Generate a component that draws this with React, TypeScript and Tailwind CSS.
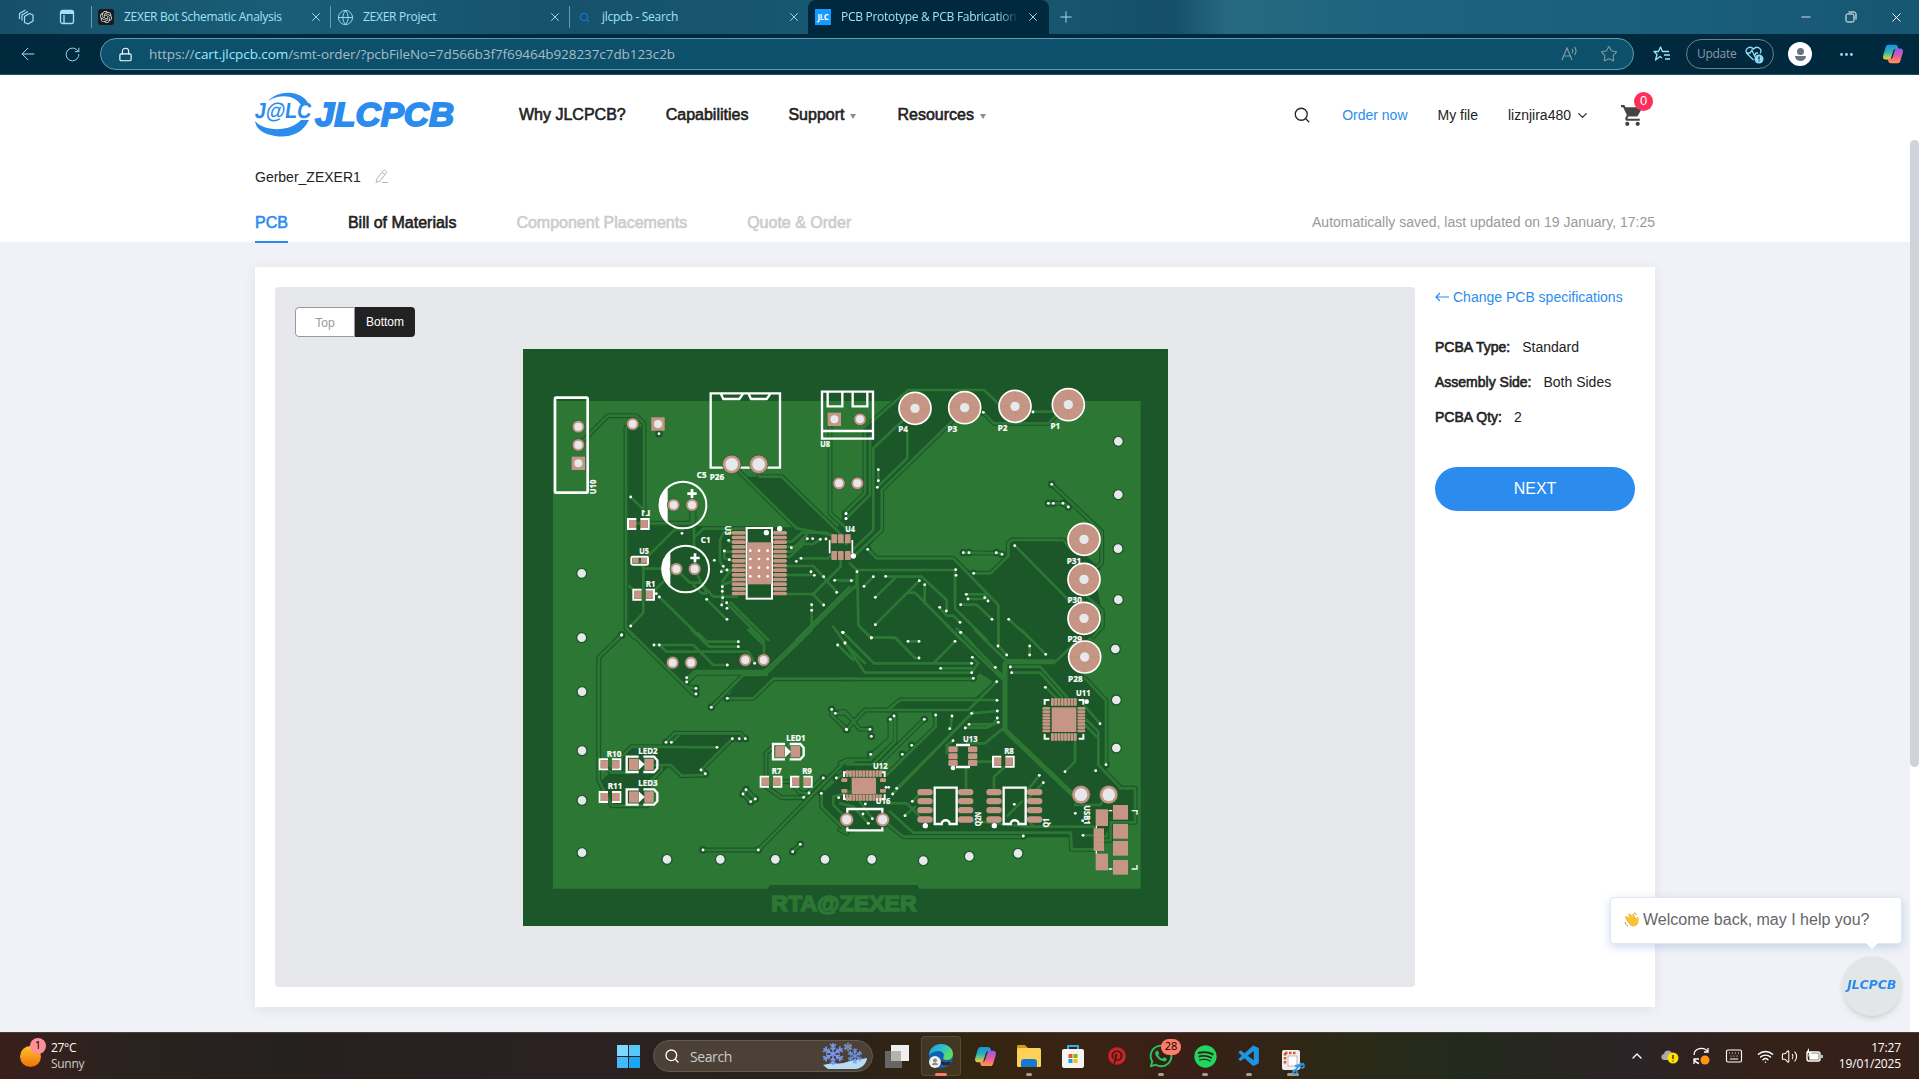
import React from "react";
import { FaWhatsapp, FaSpotify, FaPinterest } from "react-icons/fa";
import { VscVscode } from "react-icons/vsc";
import { SiOpenai } from "react-icons/si";
import { MdShoppingCart } from "react-icons/md";
import { ArrowLeft, ChevronDown, ChevronUp, Globe, Keyboard, Lock, Minus, MoreHorizontal, Plus, RotateCw, Search, Star, Volume2, Wifi, X } from "lucide-react";

/* ---------- Board drawing (units are thirds of a pixel) ---------- */

type Quad = { dx: number; dy: number; traces: string[]; vias: number[][] };

const DARK = "#1b5729";
const LIGHT = "#2d7735";
const COPPER = "#c69585";
const HOLE = "#e7e8ec";

const quads: Quad[] = [
  {
    dx: 0,
    dy: 0,
    traces: [
      "176,315 264,227 348,227 372,250 372,540",
      "318,262 318,865 340,890",
      "332,471 370,508",
      "338,550 515,550 515,500",
      "522,500 522,620",
      "486,568 465,568 380,652",
      "524,590 550,566 740,566",
      "360,662 370,686 465,686",
      "328,738 350,762",
      "370,680 370,818 332,858",
      "400,755 465,690",
      "418,771 550,900",
      "470,690 510,728 540,728 580,770 650,770",
      "525,690 560,760 545,760 520,735",
      "560,778 620,838",
      "655,578 610,578 600,600 600,665 608,678",
      "655,605 626,605",
      "655,635 613,635 613,655 640,662",
      "655,690 605,690",
      "655,718 607,735 607,770 607,790",
      "655,675 625,700 607,725",
      "620,790 730,900",
      "632,788 745,900",
      "635,372 830,565 960,590",
      "716,372 718,410 785,410 960,580",
      "930,262 930,520 985,570",
      "780,605 815,605 845,578 920,578 980,612",
      "780,620 825,620 860,585",
      "780,635 812,635 862,596",
      "780,650 810,650 850,612 880,612 902,598",
      "840,655 925,655 950,635",
      "780,678 880,678 950,755",
      "780,705 873,705 873,695",
      "780,762 880,762 962,680 962,650",
      "830,900 990,740",
      "840,900 990,752",
      "875,795 875,855 830,900",
      "910,795 878,762",
      "945,720 1000,720",
      "305,885 290,900",
    ],
    vias: [
      [417, 281], [332, 471], [486, 580], [626, 601], [613, 633], [583, 661], [628, 659], [610, 679], [604, 695], [621, 690],
      [607, 740], [607, 754], [608, 773], [605, 795], [620, 788], [621, 805], [621, 838], [560, 778], [409, 761], [418, 771],
      [332, 858], [305, 885], [862, 596], [878, 596], [901, 598], [918, 597], [814, 623], [829, 664], [843, 655], [873, 695],
      [883, 706], [911, 710], [944, 721], [950, 757], [911, 795], [875, 794], [875, 811], [968, 877], [978, 521], [978, 536], [440, 712],
    ],
  },
  {
    dx: 960,
    dy: 0,
    traces: [
      "75,275 75,460 18,515",
      "90,290 90,465 18,536",
      "95,245 205,150 432,150 490,205",
      "190,240 100,325 100,570 40,628",
      "202,275 202,355 112,442",
      "335,245 125,450 125,570 40,650",
      "430,217 462,250 625,250 660,215",
      "580,215 640,215",
      "115,389 115,425",
      "635,433 785,575 785,670 760,690",
      "625,490 670,490 685,500",
      "83,628 110,655 340,655 475,795 475,920",
      "370,638 485,640",
      "400,700 452,700 505,648 505,610 515,600 670,600 690,625",
      "30,670 50,690 345,690 345,805 440,900",
      "52,690 55,855 90,892 165,892 180,905",
      "525,617 690,785",
      "0,722 34,722",
      "50,690 50,735 0,782",
      "72,738 100,710",
      "137,710 245,710 320,780 320,812",
      "106,772 165,715",
      "106,854 238,722",
      "205,758 225,758 365,900",
      "254,735 254,790",
      "299,803 320,827 340,827 361,848",
      "379,763 434,763 444,782",
      "384,777 434,777",
      "362,794 410,794 456,838",
      "506,838 575,900",
      "362,877 400,915",
      "740,768 787,812 787,860 760,890",
    ],
    vias: [
      [430, 217], [579, 216], [115, 389], [115, 422], [112, 442], [18, 521], [18, 536], [83, 628], [635, 433], [625, 490],
      [640, 490], [669, 490], [685, 501], [370, 638], [387, 638], [469, 638], [486, 643], [401, 700], [347, 689], [348, 706],
      [524, 617], [51, 695], [34, 722], [72, 739], [100, 710], [137, 709], [106, 772], [106, 854], [238, 722], [254, 734],
      [299, 802], [319, 813], [360, 847], [379, 763], [384, 777], [434, 773], [444, 783], [362, 794], [456, 838], [506, 838],
      [362, 877], [94, 893], [9, 877],
    ],
  },
  {
    dx: 0,
    dy: 870,
    traces: [
      "305,15 236,83 236,450 275,527 380,527",
      "320,-5 520,192 528,192",
      "500,170 527,176",
      "402,45 520,45 580,105 622,105",
      "418,45 440,65 685,65 704,100",
      "515,0 568,50 655,50",
      "535,10 560,35 655,35",
      "685,0 732,45 732,90",
      "690,-5 732,35",
      "500,145 525,123 735,123 865,0",
      "500,156 530,130 740,130 875,0",
      "574,232 670,135 740,135",
      "622,205 700,205 760,146 1000,146",
      "438,337 463,310 662,310 676,326",
      "455,337 475,318",
      "300,385 335,350 591,352",
      "637,326 545,418 556,431",
      "405,405 452,405 485,437 556,435",
      "425,405 425,420 390,455",
      "255,410 275,428 330,428",
      "760,350 738,370 738,470 785,503 850,503",
      "770,455 820,455",
      "820,465 840,488 866,490",
      "549,660 715,660 975,395 1000,395",
      "818,665 841,643",
      "905,490 905,530 975,600 1000,600",
      "950,445 975,430",
      "990,485 940,500 940,525 975,560",
      "680,478 669,492 692,515 706,507 680,478",
      "935,238 935,255 980,298",
      "945,250 975,250 1000,272",
      "953,45 1000,90",
      "970,8 990,26",
      "850,503 910,443",
    ],
    vias: [
      [305, 15], [402, 45], [418, 45], [655, 35], [655, 50], [622, 105], [704, 100], [500, 143], [500, 156], [528, 175],
      [528, 192], [574, 232], [622, 205], [438, 337], [454, 337], [637, 326], [658, 326], [676, 326], [591, 352], [543, 420],
      [556, 431], [678, 479], [669, 492], [706, 507], [692, 515], [549, 660], [715, 660], [818, 665], [841, 643], [851, 502],
      [867, 489], [904, 490], [910, 444], [949, 444], [956, 503], [935, 238], [946, 250], [979, 298], [953, 45], [975, 39], [968, 7],
    ],
  },
  {
    dx: 960,
    dy: 870,
    traces: [
      "9,7 102,100 395,100",
      "15,39 75,128 395,128",
      "-20,-10 15,40 75,100",
      "70,0 95,23 165,23 225,84 237,84",
      "204,34 237,34",
      "345,34 280,100",
      "302,115 395,115",
      "397,82 415,100 395,128",
      "0,146 400,146",
      "335,0 490,150",
      "350,-5 490,140",
      "405,0 497,90 645,96 705,40",
      "475,-20 475,48 500,75",
      "545,0 617,73",
      "569,48 569,75",
      "470,155 385,240 75,240 20,298",
      "0,245 15,245 60,298 90,298",
      "145,240 180,210 470,210",
      "0,400 20,390 90,390 155,330 155,270",
      "20,403 98,403 165,335 165,258",
      "150,270 150,325 90,380",
      "253,268 110,410",
      "287,255 287,290 140,435",
      "395,250 158,492",
      "170,475 400,245",
      "336,258 332,295",
      "376,293 440,293 475,277",
      "387,283 460,283 472,265",
      "472,243 395,250",
      "490,295 435,340 380,340",
      "340,332 320,345 320,370",
      "512,110 600,110 680,200",
      "515,128 600,128 665,200",
      "617,172 650,205",
      "735,230 780,280",
      "740,270 775,305 775,405 840,472",
      "735,285 770,320",
      "735,145 798,212 798,403",
      "705,330 705,395 675,425",
      "840,475 885,475 885,577 812,577 812,630 790,632",
      "800,630 812,630",
      "378,415 378,480",
      "410,395 460,395",
      "495,410 462,440 462,480",
      "598,436 500,560",
      "610,458 560,510",
      "523,523 523,560",
      "560,510 495,570",
      "375,570 560,590 760,590 780,610",
      "530,530 560,560 580,590",
      "725,495 705,525 780,525 800,500",
      "217,514 240,490",
      "195,557 225,530",
      "140,520 200,520 250,570",
      "130,570 190,620 550,620",
      "150,545 220,608 692,608 695,658 770,658",
      "729,616 775,616",
      "0,520 40,530 85,580",
      "60,515 97,566",
      "0,600 20,610",
    ],
    vias: [
      [9, 7], [15, 39], [94, 24], [204, 34], [237, 34], [345, 34], [237, 84], [362, 7], [397, 82], [395, 100],
      [302, 115], [395, 128], [400, 145], [466, 112], [474, 48], [500, 75], [511, 111], [515, 128], [569, 48], [569, 75],
      [617, 73], [470, 155], [471, 211], [472, 243], [472, 264], [475, 277], [395, 250], [387, 283], [376, 294], [336, 258],
      [329, 296], [339, 332], [287, 255], [253, 268], [162, 258], [151, 268], [20, 299], [90, 298], [94, 319], [92, 373],
      [187, 373], [215, 346], [616, 172], [780, 281], [798, 404], [767, 422], [675, 425], [598, 436], [610, 458], [170, 475],
      [158, 492], [138, 472], [146, 472], [217, 514], [195, 557], [523, 523], [550, 618], [706, 550], [729, 616], [76, 522], [69, 552],
      [97, 566], [85, 580], [728, 572],
    ],
  },
];

const mountHoles = [
  [185, 700], [185, 893], [186, 1055], [186, 1232], [186, 1381], [186, 1538], [441, 1558], [601, 1558], [766, 1558], [915, 1558],
  [1055, 1558], [1210, 1562], [1348, 1549], [1494, 1540], [1795, 304], [1795, 464], [1794, 626], [1795, 779], [1786, 927], [1789, 1080], [1789, 1224],
];

const bigPads = [
  [1185, 205, 50], [1334, 203, 50], [1485, 199, 50], [1645, 194, 50], [1692, 598, 50], [1692, 718, 50], [1692, 835, 50], [1694, 951, 50],
];

const ringPads = [
  [175, 260, 19, 12], [175, 315, 19, 12], [338, 252, 19, 12], [635, 373, 28, 19], [716, 373, 28, 19], [461, 495, 19, 12], [516, 495, 19, 12],
  [469, 687, 19, 12], [524, 687, 19, 12], [957, 430, 19, 12], [1012, 430, 19, 12], [1020, 238, 19, 12], [458, 968, 19, 12], [513, 968, 19, 12],
  [676, 960, 19, 12], [731, 960, 19, 12], [980, 1439, 21, 14], [1088, 1439, 21, 14], [1683, 1364, 28, 19], [1766, 1364, 28, 19],
];

const squarePads = [[175, 370], [414, 252], [943, 238]];

const labels: [number, number, string, number?, boolean?][] = [
  [228, 441, "U10", -90], [376, 528, "L1", 0, true], [372, 642, "U5"], [392, 740, "R1"], [545, 415, "C5"], [591, 421, "P26"],
  [557, 609, "C1"], [615, 571, "U3", 90], [915, 322, "U8"], [990, 577, "U4"], [1149, 277, "P4"], [1297, 275, "P3"], [1448, 272, "P2"],
  [1606, 267, "P1"], [1662, 671, "P31"], [1664, 790, "P30"], [1664, 907, "P29"], [1666, 1025, "P28"], [1690, 1068, "U11"], [828, 1202, "LED1"],
  [384, 1241, "LED2"], [384, 1339, "LED3"], [282, 1251, "R10"], [285, 1348, "R11"], [770, 1302, "R7"], [861, 1302, "R9"], [1351, 1205, "U13"],
  [1467, 1242, "R8"], [1081, 1286, "U12"], [1089, 1393, "U16"], [1382, 1437, "Q2N", -90], [1588, 1448, "Q1", -90], [1693, 1425, "USB1", 90],
];

function Bracket({ x, y, w, h }: { x: number; y: number; w: number; h: number }) {
  const c = 14;
  return (
    <path
      d={`M${x},${y + c}V${y}H${x + c} M${x + w - c},${y}H${x + w}V${y + c} M${x + w},${y + h - c}V${y + h}H${x + w - c} M${x + c},${y + h}H${x}V${y + h - c}`}
      fill="none"
      stroke="#fff"
      strokeWidth="6"
    />
  );
}

function TwoPad({ x, y, gap = 36 }: { x: number; y: number; gap?: number }) {
  return (
    <g>
      <g fill="none" stroke="#fff" strokeWidth="6">
        <path d={`M${x + 12},${y - 15}H${x - 13}V${y + 15}H${x + 12}`} />
        <path d={`M${x + gap - 12},${y - 15}H${x + gap + 13}V${y + 15}H${x + gap - 12}`} />
      </g>
      <rect x={x - 10} y={y - 12} width="22" height="24" fill={COPPER} />
      <rect x={x + gap - 12} y={y - 12} width="22" height="24" fill={COPPER} />
    </g>
  );
}

function Led({ x, y }: { x: number; y: number }) {
  return (
    <g>
      <path d={`M${x + 36},${y - 23}H${x}V${y + 23}H${x + 36}`} fill="none" stroke="#fff" strokeWidth="7" />
      <path d={`M${x + 50},${y - 23}H${x + 82}L${x + 92},${y - 12}V${y + 12}L${x + 82},${y + 23}H${x + 50}`} fill="none" stroke="#fff" strokeWidth="7" />
      <rect x={x + 7} y={y - 17} width="28" height="34" fill={COPPER} />
      <rect x={x + 53} y={y - 17} width="28" height="34" fill={COPPER} />
      <path d={`M${x + 36},${y - 17}L${x + 54},${y}L${x + 36},${y + 17}Z`} fill="#fff" />
    </g>
  );
}

function Soic({ x, y }: { x: number; y: number }) {
  return (
    <g>
      {[0, 27, 54, 82].map((o) => (
        <g key={o} fill={COPPER}>
          <rect x={x - 48} y={y + 4 + o} width="46" height="19" rx="9" />
          <rect x={x + 74} y={y + 4 + o} width="46" height="19" rx="9" />
        </g>
      ))}
      <path
        d={`M${x + 4},${y}H${x + 70}V${y + 109}H${x + 49}C${x + 49},${y + 94} ${x + 25},${y + 94} ${x + 25},${y + 109}H${x + 4}Z`}
        fill={DARK}
        stroke="#fff"
        strokeWidth="7"
      />
      <circle cx={x - 24} cy={y + 114} r="8" fill="#fff" />
    </g>
  );
}

function Board() {
  return (
    <svg width="645" height="577" viewBox="9 27 1935 1731" preserveAspectRatio="none" className="block">
      <rect x="9" y="27" width="1935" height="1731" fill={DARK} />
      <path d="M99,183H1862V1646H1197L1193,1635H750L743,1646H99Z" fill={LIGHT} />
      <polygon
        fill={DARK}
        points="325,262 368,262 368,556 830,562 675,410 785,410 950,570 975,515 1030,460 1030,270 1120,182 1680,182 1620,215 1585,255 1420,255 1385,215 1295,240 1090,450 1090,570 1040,628 1070,655 1300,655 1360,700 1415,700 1465,650 1465,610 1475,600 1630,600 1690,640 1745,690 1720,690 1745,810 1745,860 1700,900 1690,1015 1760,1080 1760,1290 1800,1342 1845,1342 1845,1445 1780,1450 1720,1530 1655,1530 1650,1492 1147,1492 1110,1445 1090,1472 970,1472 900,1400 905,1360 965,1310 965,1264 1050,1264 1100,1305 1245,1160 1245,1112 1110,1110 1140,1080 1365,1075 1420,1025 1380,1000 1360,1016 760,1016 700,1075 622,1075 665,1005 525,998 490,1035 325,870"
      />
      <polygon
        fill={DARK}
        points="470,1185 655,1185 545,1295 550,1305 485,1307 450,1275 425,1300 400,1325 370,1395 275,1390 240,1325 300,1270 335,1220 440,1215"
      />
      {quads.map((q, i) => (
        <g key={i} transform={`translate(${q.dx} ${q.dy})`} fill="none" stroke={DARK} strokeWidth="15" strokeLinejoin="round" strokeLinecap="round">
          {q.traces.map((p) => (
            <polyline key={p} points={p} />
          ))}
          {q.vias.map(([x, y]) => (
            <circle key={`${x}-${y}`} cx={x} cy={y} r="4" />
          ))}
        </g>
      ))}
      {quads.map((q, i) => (
        <g key={i} transform={`translate(${q.dx} ${q.dy})`} fill="none" stroke={LIGHT} strokeWidth="8" strokeLinejoin="round" strokeLinecap="round">
          {q.traces.map((p) => (
            <polyline key={p} points={p} />
          ))}
        </g>
      ))}
      {/* Wide power rail */}
      <path d="M1455,965V1170L1665,1370 M1455,965H1605" fill="none" stroke={LIGHT} strokeWidth="15" />
      {mountHoles.map(([x, y]) => (
        <circle key={`${x}-${y}`} cx={x} cy={y} r="15" fill={HOLE} stroke={DARK} strokeWidth="4" />
      ))}

      {/* Through-hole parts */}
      <g fill="none" stroke="#fff" strokeWidth="8">
        <rect x="105" y="173" width="98" height="285" rx="3" />
        <path d="M572,160H780V383H572Z M602,160L610,177H658L670,160 M685,160L693,177H740L752,160" strokeWidth="7" />
        <path d="M906,155H1059V296H906Z M906,273H1059 M923,155V199H967V155 M998,155V199H1042V155" strokeWidth="7" />
        <circle cx="489" cy="495" r="70" strokeWidth="6" />
        <circle cx="497" cy="687" r="70" strokeWidth="6" />
        <path d="M502,461H530M516,447V475 M511,654H539M525,640V668" />
      </g>
      <path d="M443,440A70,70 0 0 0 443,550Z M451,632A70,70 0 0 0 451,742Z" fill="#fff" />

      {bigPads.map(([x, y, r]) => (
        <g key={`${x}-${y}`}>
          <circle cx={x} cy={y} r={r - 2} fill={COPPER} stroke="#fff" strokeWidth="5" />
          <path d={`M${x - 45},${y}H${x + 45}M${x},${y - 45}V${y + 45}`} stroke="#b39768" strokeWidth="2" />
          <circle cx={x} cy={y} r="14" fill={HOLE} />
        </g>
      ))}
      {ringPads.map(([x, y, r, h]) => (
        <g key={`${x}-${y}`}>
          <circle cx={x} cy={y} r={r} fill={COPPER} stroke={DARK} strokeWidth="2" />
          <circle cx={x} cy={y} r={h} fill={HOLE} />
        </g>
      ))}
      {squarePads.map(([x, y]) => (
        <g key={`${x}-${y}`}>
          <rect x={x - 20} y={y - 20} width="40" height="40" fill={COPPER} />
          <circle cx={x} cy={y} r="12" fill={HOLE} />
        </g>
      ))}

      {/* Passives */}
      <TwoPad x={337} y={552} />
      <TwoPad x={353} y={764} />
      <TwoPad x={252} y={1273} />
      <TwoPad x={252} y={1371} />
      <TwoPad x={735} y={1325} />
      <TwoPad x={826} y={1325} />
      <TwoPad x={1432} y={1265} />
      <rect x="334" y="650" width="50" height="24" rx="4" fill="none" stroke="#fff" strokeWidth="6" />
      <path d="M338,654H356V670H338Z M363,654H381V670H363Z" fill={COPPER} />
      <Led x={320} y={1273} />
      <Led x={320} y={1371} />
      <Led x={759} y={1235} />

      {/* U3 driver */}
      {Array.from({ length: 14 }, (_, i) => (
        <g key={i} fill={COPPER}>
          <rect x="635" y={573 + i * 14} width="42" height="11" rx="5" />
          <rect x="759" y={573 + i * 14} width="42" height="11" rx="5" />
        </g>
      ))}
      <rect x="680" y="564" width="76" height="212" fill={DARK} stroke="#fff" strokeWidth="6" />
      <rect x="681" y="607" width="74" height="126" fill={COPPER} />
      {[632, 657, 683, 709].map((y) =>
        [691, 717, 743].map((x) => <circle key={`${x}-${y}`} cx={x} cy={y} r="4" fill="#fff" />)
      )}
      <circle cx="739" cy="578" r="8" fill="#fff" />
      <circle cx="779" cy="566" r="8" fill="#fff" />

      {/* U4 */}
      {[934, 954, 975].map((x) => (
        <g key={x} fill={COPPER}>
          <rect x={x} y="583" width="17" height="27" rx="2" />
          <rect x={x} y="633" width="17" height="27" rx="2" />
        </g>
      ))}
      <path d="M929,600V640 M997,600V640" stroke="#fff" strokeWidth="5" />
      <circle cx="1000" cy="648" r="8" fill="#fff" />

      {/* U11 */}
      <Bracket x={1574} y={1080} w={116} h={116} />
      <rect x="1595" y="1102" width="74" height="74" fill={COPPER} />
      {Array.from({ length: 8 }, (_, i) => (
        <g key={i} fill={COPPER}>
          <rect x={1593 + i * 9.8} y="1074" width="8.6" height="24" rx="4" />
          <rect x={1593 + i * 9.8} y="1179" width="8.6" height="24" rx="4" />
          <rect x="1567" y={1101 + i * 9.6} width="24" height="8.6" rx="4" />
          <rect x="1672" y={1101 + i * 9.6} width="24" height="8.6" rx="4" />
        </g>
      ))}
      <circle cx="1700" cy="1085" r="7" fill="#fff" />

      {/* U12 */}
      <Bracket x={972} y={1297} w={122} h={80} />
      <rect x="995" y="1313" width="73" height="49" fill={COPPER} />
      {Array.from({ length: 11 }, (_, i) => (
        <g key={i} fill={COPPER}>
          <rect x={977 + i * 10} y="1291" width="8.8" height="20" rx="3" />
          <rect x={977 + i * 10} y="1363" width="8.8" height="20" rx="3" />
        </g>
      ))}
      <g fill={COPPER}>
        <rect x="964" y="1315" width="18" height="11" rx="3" />
        <rect x="964" y="1347" width="18" height="11" rx="3" />
        <rect x="1080" y="1315" width="18" height="11" rx="3" />
        <rect x="1080" y="1347" width="18" height="11" rx="3" />
      </g>

      {/* U16 */}
      <path d="M982,1418V1407H1087V1418 M982,1462V1471H1087V1462" fill="none" stroke="#fff" strokeWidth="7" />

      {/* U13 */}
      <path d="M1308,1215H1350 M1308,1281H1350" stroke="#fff" strokeWidth="7" />
      {[1219, 1240, 1260].map((y) => (
        <g key={y} fill={COPPER}>
          <rect x="1285" y={y} width="28" height="18" rx="4" />
          <rect x="1344" y={y} width="28" height="18" rx="4" />
        </g>
      ))}
      <circle cx="1299" cy="1284" r="7" fill="#fff" />

      <Soic x={1240} y={1343} />
      <Soic x={1447} y={1343} />
      <path d="M1460,1430L1508,1382" stroke={LIGHT} strokeWidth="8" />

      {/* USB connector */}
      <g fill={COPPER}>
        <rect x="1727" y="1408" width="37" height="50" />
        <rect x="1727" y="1541" width="37" height="50" />
        <rect x="1721" y="1465" width="31" height="68" />
        <rect x="1779" y="1395" width="45" height="44" />
        <rect x="1779" y="1452" width="45" height="44" />
        <rect x="1779" y="1503" width="45" height="44" />
        <rect x="1779" y="1560" width="45" height="44" />
      </g>
      <path d="M1721,1477H1752M1721,1491H1752M1721,1506H1752M1721,1520H1752" stroke="#b39768" strokeWidth="2" />
      <path d="M1766,1412H1777 M1766,1587H1777 M1835,1412H1851V1424 M1835,1587H1851V1575 M1729,1458V1465 M1729,1533V1541" fill="none" stroke="#fff" strokeWidth="4" />

      {quads.map((q, i) => (
        <g key={i} transform={`translate(${q.dx} ${q.dy})`} fill="#fff">
          {q.vias.map(([x, y]) => (
            <circle key={`${x}-${y}`} cx={x} cy={y} r="4.2" />
          ))}
        </g>
      ))}
      <g fill="#fff" stroke="#fff" strokeWidth="0.6" fontSize="24" fontWeight="700" className="font-['Noto_Sans',sans-serif]">
        {labels.map(([x, y, t, r, flip]) => (
          <text
            key={t}
            transform={`translate(${x} ${y}) rotate(${r ?? 0}) scale(${flip ? -1 : 1} 1)`}
            textAnchor="middle"
            textLength={t.length * 14.5}
            lengthAdjust="spacingAndGlyphs"
          >
            {t}
          </text>
        ))}
      </g>
      <text x="972" y="1713" textAnchor="middle" textLength="436" lengthAdjust="spacingAndGlyphs" fontSize="68" fontWeight="900" fill={LIGHT} stroke={LIGHT} strokeWidth="4.500" className="font-['Liberation_Sans',sans-serif]">
        RTA@ZEXER
      </text>
    </svg>
  );
}

/* ---------- Browser chrome ---------- */

function Tab({ icon, title, width }: { icon: React.ReactNode; title: string; width: string }) {
  return (
    <div className={`flex h-[34px] items-center ${width}`}>
      <span className="h-[22px] w-px bg-[#5b9fb5]" />
      <span className="ml-1.5 flex w-4 justify-center">{icon}</span>
      <span className="ml-[10px] flex-1 whitespace-nowrap tracking-[-0.28px]">{title}</span>
      <X size={14} strokeWidth={1.6} className="mr-[7px]" />
    </div>
  );
}

function Copilot({ size }: { size: number }) {
  return (
    <svg width={size} height={size} viewBox="0 0 24 24">
      <defs>
        <linearGradient id="cpa" x1="0" y1="0" x2="0" y2="1">
          <stop offset="0" stopColor="#1a8fe8" />
          <stop offset=".5" stopColor="#2cb5b0" />
          <stop offset="1" stopColor="#f3d02f" />
        </linearGradient>
        <linearGradient id="cpb" x1="0" y1="0" x2="0" y2="1">
          <stop offset="0" stopColor="#8b5cf0" />
          <stop offset=".55" stopColor="#ec5a9c" />
          <stop offset="1" stopColor="#ff9a4a" />
        </linearGradient>
      </defs>
      <path d="M7 2h7.5c1.5 0 2.300.8 2.700 2l.8 2.500h-3c-1.500 0-2.200.7-2.600 2L10 16c-.4 1.300-1 2-2.500 2H4c-2.500 0-3.500-2-2.700-4.500L4 4.500C4.500 3 5.500 2 7 2z" fill="url(#cpa)" />
      <path d="M17 22H9.500c-1.500 0-2.300-.8-2.700-2L6 17.500h3c1.500 0 2.200-.7 2.600-2L14 8c.4-1.300 1-2 2.500-2H20c2.500 0 3.500 2 2.700 4.500L20 19.500c-.5 1.500-1.500 2.500-3 2.500z" fill="url(#cpb)" />
    </svg>
  );
}

function BrowserChrome() {
  return (
    <div className="font-['Open_Sans','Noto_Sans',sans-serif] text-[#9fe3f7]">
      <div className="flex h-[34px] items-center bg-[linear-gradient(90deg,#165068_0%,#1a5d77_15%,#16526c_30%,#195a73_50%,#154f69_61%,#27697f_64%,#1d6480_72%,#19607d_85%,#175673_100%)] text-[12px]">
        <div className="flex w-[91px] items-center gap-6 pl-[17px]">
          <svg width="18" height="18" viewBox="0 0 18 18" fill="none" stroke="currentColor" strokeWidth="1.200" strokeLinejoin="round">
            <path d="M7.500 8.500l5-3 3.500 1.500v6l-5 3-3.500-1.500zM5 12.500V7l6-3.500M2.500 11V5.500L8.500 2" />
          </svg>
          <svg width="16" height="16" viewBox="0 0 16 16" fill="none" stroke="currentColor" strokeWidth="1.300">
            <rect x="1.500" y="1.500" width="13" height="13" rx="2" />
            <path d="M5 6v8" />
            <path d="M2 2h12v3H2z" fill="currentColor" stroke="none" />
          </svg>
        </div>
        <Tab
          width="w-[239px]"
          title="ZEXER Bot Schematic Analysis"
          icon={
            <span className="flex size-4 shrink-0 items-center justify-center rounded-[3px] bg-[#17191c] text-gray-200">
              <SiOpenai size={12} />
            </span>
          }
        />
        <Tab width="w-[239px]" title="ZEXER Project" icon={<Globe size={17} strokeWidth={1.3} className="shrink-0" />} />
        <Tab width="w-[239px]" title="jlcpcb - Search" icon={<Search size={11} strokeWidth={2.5} className="text-[#1479d4]" />} />
        <div className="flex h-[34px] w-[241px] items-center rounded-t-lg bg-[#00293e] pl-[7px]">
          <span className="flex size-4 items-center justify-center bg-[#139bff] text-[8px] font-bold tracking-tighter text-white">JLC</span>
          <span className="ml-[10px] w-[178px] overflow-hidden whitespace-nowrap tracking-[-0.28px] [mask-image:linear-gradient(90deg,#000_88%,transparent)]">
            PCB Prototype &amp; PCB Fabrication
          </span>
          <X size={14} strokeWidth={1.6} className="ml-[7px]" />
        </div>
        <Plus size={18} strokeWidth={1.3} className="ml-[8px]" />
        <div className="ml-auto flex items-center text-white">
          <Minus size={14} strokeWidth={1.4} className="mr-8" />
          <svg width="12" height="12" viewBox="0 0 12 12" fill="none" stroke="currentColor" className="mr-[32px]">
            <rect x="1" y="3" width="8" height="8" rx="1.500" />
            <path d="M3.500 1H9c1.200 0 2 .8 2 2v5.500" />
          </svg>
          <X size={15} strokeWidth={1.5} className="mr-[15px]" />
        </div>
      </div>
      <div className="flex h-[41px] items-center border-b border-[#1b5268] bg-[#00293e]">
        <ArrowLeft size={20} strokeWidth={1.2} className="ml-[18px]" />
        <RotateCw size={17} strokeWidth={1.3} className="ml-[26px]" />
        <div className="ml-[19px] flex h-8 w-[1534px] items-center rounded-full border border-[#5f9cb0] bg-[#0c506c] pr-[15px] text-[13.5px] tracking-[-0.07px] text-[#a9bcc3]">
          <Lock size={15} strokeWidth={1.8} className="mr-4 ml-[17px] text-white" />
          <span>
            https://<span className="text-[#9fe8ff]">cart.jlcpcb.com</span>/smt-order/?pcbFileNo=7d566b3f7f69464b928237c7db123c2b
          </span>
          <svg width="18" height="16" viewBox="0 0 18 16" fill="none" stroke="#8499a1" strokeWidth="1.200" className="ml-auto">
            <path d="M1 14L6 2l5 12M2.700 10h6.600M11 3c1 1 1 3 0 4M13.500 1c2 2 2 6 0 8" />
          </svg>
          <Star size={18} strokeWidth={1.4} className="ml-[21px] text-[#8499a1]" />
        </div>
        <svg width="18" height="17" viewBox="0 0 18 17" fill="none" stroke="currentColor" strokeWidth="1.300" className="ml-[19px]">
          <path d="M9 12l-2-1.500-4.500 3.500 1.500-5.500L1 5.500h4.500L7.500 1l2 4.500H16M11 9h6M12 13h5" strokeLinejoin="round" />
        </svg>
        <div className="ml-[15px] flex h-[30px] w-[88px] items-center justify-between rounded-full border border-[#6f7f88] pr-[9px] pl-2.5 text-[12px] tracking-[-0.3px] text-[#8a9aa1]">
          Update
          <svg width="19" height="19" viewBox="0 0 19 19" fill="none" stroke="#8fdcf5" strokeWidth="1.300">
            <path d="M8.500 15L2 8.500C-1 4 5 0 8.500 4 12 0 18 4 15 8.500M1 8h4l2-3 2.500 6 1.500-3h2" />
            <circle cx="14" cy="14" r="4.500" fill="#8fdcf5" stroke="none" />
            <path d="M14 11.500v3M14 15.500v1" stroke="#00293e" />
          </svg>
        </div>
        <span className="ml-[14px] flex size-6 flex-col items-center justify-center gap-px rounded-full bg-white">
          <span className="size-[7px] rounded-full bg-gray-500" />
          <span className="h-[5px] w-[11px] rounded-b-full bg-gray-500" />
        </span>
        <MoreHorizontal size={17} strokeWidth={2} className="ml-[26px]" />
        <span className="ml-[27px]">
          <Copilot size={22} />
        </span>
      </div>
    </div>
  );
}

/* ---------- Page ---------- */

function Caret() {
  return <span className="mt-0.5 ml-1.5 border-x-[3px] border-t-[5px] border-x-transparent border-t-[#8c8c8c]" />;
}

function Logo() {
  return (
    <svg width="200" height="46" viewBox="0 0 200 46" className="font-['Liberation_Sans',sans-serif]" fill="#2b8cee">
      <path d="M13 9C24-3 48-2 54 13H46C40 4 27 1 13 9z" />
      <path d="M0 29C8 39 34 41 46 28H54C47 43 32 46 20 44 8 42 1 37 0 29z" />
      <text x="0" y="26" fontSize="22" fontWeight="700" textLength="56" lengthAdjust="spacingAndGlyphs" transform="skewX(-8) translate(3 0)">
        J@LC
      </text>
      <text x="60" y="34" fontSize="34" fontWeight="700" fontStyle="italic" stroke="#2b8cee" strokeWidth="1.800" textLength="139" lengthAdjust="spacingAndGlyphs">
        JLCPCB
      </text>
    </svg>
  );
}

function Spec({ label, value }: { label: string; value: string }) {
  return (
    <div className="mb-[15px] flex h-5 items-center gap-3 whitespace-nowrap">
      <span className="[-webkit-text-stroke:0.6px]">{label}</span>
      <span>{value}</span>
    </div>
  );
}

function Page() {
  return (
    <div className="relative flex h-[957px] bg-[#f0f2f7] font-['Liberation_Sans',Arial,sans-serif] text-[14px] text-[#222]">
      <div className="w-[1910px]">
        <div className="h-[167px] bg-white pl-[255px]">
          <div className="flex h-[80px] w-[1400px] items-center text-[16px]">
            <Logo />
            <nav className="ml-[64px] flex items-center [-webkit-text-stroke:0.6px]">
              <span>Why JLCPCB?</span>
              <span className="ml-[40px]">Capabilities</span>
              <span className="ml-[40px]">Support</span>
              <Caret />
              <span className="ml-[41px]">Resources</span>
              <Caret />
            </nav>
            <div className="ml-auto flex items-center text-[14px]">
              <Search size={18} strokeWidth={1.7} />
              <span className="ml-[31px] text-[#2b8cee]">Order now</span>
              <span className="ml-[30px]">My file</span>
              <span className="ml-[30px]">liznjira480</span>
              <ChevronDown size={15} strokeWidth={1.9} className="ml-1" />
              <span className="relative mr-2.5 ml-[30px]">
                <MdShoppingCart size={25} color="#444" />
                <span className="absolute -top-[11px] left-[14px] flex size-[19px] items-center justify-center rounded-full bg-[#ff2e5b] text-[13px] text-white">0</span>
              </span>
            </div>
          </div>
          <div className="flex h-[45px] items-center">
            Gerber_ZEXER1
            <svg width="15" height="15" viewBox="0 0 15 15" fill="none" stroke="#b5b5b5" className="mb-[3px] ml-[13px]">
              <path d="M2 13.500l1-4L9.500 1.500c1-1 3.500.5 3 2L6 12zM8 3.500l3 2M8 13.500h6" />
            </svg>
          </div>
          <div className="flex h-[43px] w-[1400px] gap-[60px] text-[16px]">
            <span className="border-b-2 border-[#2b8cee] pt-[11px] text-[#2b8cee] [-webkit-text-stroke:0.6px]">PCB</span>
            <span className="pt-[11px] [-webkit-text-stroke:0.6px]">Bill of Materials</span>
            <span className="pt-[11px] text-[#ccc] [-webkit-text-stroke:0.6px]">Component Placements</span>
            <span className="pt-[11px] text-[#ccc] [-webkit-text-stroke:0.6px]">Quote &amp; Order</span>
            <span className="ml-auto pt-[12px] text-[14px] text-[#999]">Automatically saved, last updated on 19 January, 17:25</span>
          </div>
        </div>
        <div className="mt-[25px] ml-[255px] flex h-[740px] w-[1400px] bg-white p-5 shadow-[0_2px_12px_rgba(0,0,0,0.07)]">
          <div className="flex h-[700px] w-[1140px] flex-col rounded bg-[#e7e8ec] pt-5">
            <div className="ml-5 flex h-[30px] w-[120px] text-[12px]">
              <span className="flex w-[60px] items-center justify-center rounded-l border border-[#999] bg-white pt-0.5 text-[#999]">Top</span>
              <span className="flex w-[60px] items-center justify-center rounded-r bg-[#222] text-white">Bottom</span>
            </div>
            <div className="mt-3 ml-[248px]">
              <Board />
            </div>
          </div>
          <div className="ml-5 w-[200px]">
            <div className="mb-[30px] flex h-5 items-center whitespace-nowrap text-[#2b8cee]">
              <svg width="14" height="10" viewBox="0 0 14 10" fill="none" stroke="currentColor" strokeWidth="1.200" className="mr-1">
                <path d="M5 1L1 5l4 4M1 5h13" />
              </svg>
              Change PCB specifications
            </div>
            <Spec label="PCBA Type:" value="Standard" />
            <Spec label="Assembly Side:" value="Both Sides" />
            <Spec label="PCBA Qty:" value="2" />
            <button className="mt-[40px] flex h-11 w-[200px] items-center justify-center rounded-full bg-[#2b8cee] text-[16px] text-white">NEXT</button>
          </div>
        </div>
      </div>
      <div className="w-[9px] bg-white pt-[65px]">
        <div className="h-[627px] rounded-full bg-[#d0d3dc]" />
      </div>

      {/* Floating chat widget */}
      <div className="absolute right-[17px] bottom-[16px] flex flex-col items-end">
        <div className="relative flex h-[47px] w-[292px] items-center rounded border border-[#dfe6f5] bg-white pb-[2px] pl-[13px] text-[16px] text-[#666] shadow-[0_3px_10px_rgba(120,150,210,0.35)]">
          <svg width="15" height="15" viewBox="0 0 15 15" className="mr-1">
            <path d="M2 8L1 4.500l2-.5L6 6 4 2.500l2-1L9 5 8 2l1.500-.5L12.500 7l.5-2h1.500v5c-.5 4-5 5.500-8 3.500z" fill="#f7c137" />
            <path d="M1 10c.5 2 1.500 3.500 3 4M10 1c1 0 2 1 2.500 2" stroke="#8b8b8b" fill="none" />
          </svg>
          Welcome back, may I help you?
          <span className="absolute right-[24px] -bottom-[4px] size-[10px] rotate-45 bg-white" />
        </div>
        <div className="mt-3 flex size-[60px] items-center justify-center rounded-full bg-[#e2e6e6] font-['DejaVu_Sans',sans-serif] text-[11.5px] font-bold text-[#2b8cee] italic shadow-md">
          <span className="scale-x-108">JLCPCB</span>
        </div>
      </div>
    </div>
  );
}

/* ---------- Taskbar ---------- */

function Cell({ children, dot }: { children: React.ReactNode; dot?: string }) {
  return (
    <div className="relative flex h-[47px] w-11 shrink-0 items-center justify-center">
      {children}
      {dot && <span className={`absolute bottom-[4px] h-[3px] rounded-full ${dot}`} />}
    </div>
  );
}

function Snowflake({ x, y, s, c }: { x: number; y: number; s: number; c: string }) {
  return (
    <g transform={`translate(${x} ${y}) scale(${s})`} stroke={c} strokeWidth="1.500" fill="none">
      {[0, 60, 120, 180, 240, 300].map((a) => (
        <path key={a} transform={`rotate(${a})`} d="M0 0V-11M-3-10L0-7 3-10M-2.500-6.500L0-4 2.500-6.500" />
      ))}
    </g>
  );
}

function Taskbar() {
  return (
    <div className="flex h-[47px] items-center border-t border-[#4a3f3c] bg-[linear-gradient(90deg,#3a1f1c_0%,#29231f_7%,#25211f_15%,#2b2122_30%,#28211e_42%,#33260f_50%,#3a2313_56%,#391f16_62%,#2b2a16_70%,#232a1d_76%,#2b2426_85%,#352118_93%,#35211a_100%)] font-['Open_Sans','Noto_Sans',sans-serif] text-[12px] text-white">
      <div className="flex w-[607px] items-center">
        <span className="relative ml-5 size-[21px] rounded-full bg-linear-to-b from-[#ffc02e] to-[#ee7203]">
          <span className="absolute -top-2 left-[10px] flex size-4 items-center justify-center rounded-full bg-[#ff8f98] text-[11px] text-black">1</span>
        </span>
        <span className="ml-[10px] leading-[16px] tracking-[-0.3px]">
          27°C
          <br />
          <span className="text-[#ccc]">Sunny</span>
        </span>
      </div>
      <Cell>
        <span className="mr-px grid size-[23px] grid-cols-2 gap-px">
          <span className="bg-[#7fd9ff]" />
          <span className="bg-[#55c8fb]" />
          <span className="bg-[#3fbcf9]" />
          <span className="bg-[#1ba5f2]" />
        </span>
      </Cell>
      <div className="mr-0.5 ml-0.5 flex h-8 w-[220px] items-center rounded-full border border-[#665a4d] bg-[#4b4136] pl-[10px] text-[14px] tracking-[-0.4px] text-[#ccc]">
        <Search size={16} strokeWidth={2} className="mr-[10px] text-white" />
        Search
        <svg width="48" height="28" viewBox="0 0 48 28" className="mr-1 ml-auto">
          <path d="M3 23C12 20 20 23 27 20 34 17 40 18 47 16 47 20 43 26 36 27H8z" fill="#b9dcf5" />
          <Snowflake x={13} y={12} s={1} c="#7899f2" />
          <Snowflake x={35} y={14} s={0.7} c="#6d9cf0" />
          <Snowflake x={28} y={5} s={0.4} c="#8fb1e8" />
        </svg>
      </div>
      <Cell>
        <span className="relative size-6">
          <span className="absolute bottom-0 left-0 size-[17px] bg-[#666]" />
          <span className="absolute top-[1px] right-0 h-[16px] w-[18px] bg-[#eee]" />
          <span className="absolute top-[7px] left-[6px] size-[10px] bg-[#b5b2b0]" />
        </span>
      </Cell>
      <Cell dot="w-3 bg-[#ff7d68] z-10">
        <span className="flex h-10 w-10 items-center justify-center rounded border border-white/10 bg-white/8">
          <svg width="26" height="26" viewBox="0 0 26 26">
            <defs>
              <linearGradient id="edg" x1="0" y1="0" x2="1" y2="0.5">
                <stop offset="0" stopColor="#1b9de2" />
                <stop offset=".6" stopColor="#35c1c9" />
                <stop offset="1" stopColor="#5fdc5a" />
              </linearGradient>
            </defs>
            <circle cx="13" cy="13" r="12" fill="#0f62b0" />
            <path d="M1 13C1 5 7 1 13 1c7 0 12 4.500 12 10 0 4-3 6-6.500 6-3 0-4-1.500-3-3 1.500-3-1-6-5-6-5 0-9 3-9.500 5z" fill="url(#edg)" />
            <path d="M10 14c0 5 5 8 12 6" stroke="#382320" strokeWidth="3" fill="none" />
            <circle cx="7" cy="19" r="6" fill="#eee" />
            <circle cx="7" cy="17.500" r="2" fill="#888" />
            <path d="M4 22c0-3 6-3 6 0z" fill="#888" />
          </svg>
        </span>
      </Cell>
      <Cell>
        <Copilot size={23} />
      </Cell>
      <Cell dot="w-1.5 bg-[#a89d94]">
        <svg width="26" height="24" viewBox="0 0 26 24">
          <path d="M1 2.500C1 1.500 1.500 1 2.500 1H9l3 3v5H1z" fill="#d9950e" />
          <rect x="1" y="4" width="24" height="19" rx="1.500" fill="#ffd257" />
          <path d="M5 23v-5c0-2 1-3 3-3h10c2 0 3 1 3 3v5z" fill="#1779cf" />
        </svg>
      </Cell>
      <Cell>
        <svg width="24" height="25" viewBox="0 0 24 25">
          <path d="M7 6V2h10v4" fill="none" stroke="#2eaef0" strokeWidth="2" />
          <rect x="1" y="5" width="22" height="19" rx="2" fill="#f4f4f4" />
          <path d="M7.500 10h4v4h-4z" fill="#f25022" />
          <path d="M12.500 10h4v4h-4z" fill="#7fba00" />
          <path d="M7.500 15h4v4h-4z" fill="#00a4ef" />
          <path d="M12.500 15h4v4h-4z" fill="#ffb900" />
        </svg>
      </Cell>
      <Cell>
        <FaPinterest size={18} color="#d0202c" />
      </Cell>
      <Cell dot="w-1.5 bg-[#a89d94]">
        <FaWhatsapp size={26} color="#23c862" />
        <span className="absolute top-[6px] right-0.5 flex h-4 w-5 items-center justify-center rounded-full bg-[#ff7d68] text-[11px] text-black">28</span>
      </Cell>
      <Cell dot="w-1.5 bg-[#a89d94]">
        <FaSpotify size={23} color="#1ed760" />
      </Cell>
      <Cell dot="w-1.5 bg-[#a89d94]">
        <VscVscode size={25} color="#1f94e0" />
      </Cell>
      <Cell dot="w-3 bg-[#a89d94]">
        <svg width="26" height="28" viewBox="0 0 26 28" className="z-10 mt-3">
          <rect x="2" y="2" width="18" height="20" rx="2" fill="#eee" />
          <path d="M5 5h12M5 5v12" stroke="#e0502c" strokeWidth="2.500" strokeDasharray="2.500 1.500" fill="none" />
          <rect x="8" y="8" width="9" height="10" fill="#fff" stroke="#bbb" />
          <path d="M14 24l7-9M24 16l-9 2" stroke="#3498db" strokeWidth="2" />
          <circle cx="15" cy="24" r="2" fill="none" stroke="#3498db" strokeWidth="1.500" />
          <circle cx="22" cy="18" r="2" fill="none" stroke="#3498db" strokeWidth="1.500" />
        </svg>
      </Cell>
      <div className="mr-[18px] ml-auto flex items-center">
        <ChevronUp size={16} strokeWidth={2} />
        <svg width="20" height="18" viewBox="0 0 20 18" className="ml-[15px]">
          <path d="M4 13C0 12 1 7 4 7c1-5 8-4 8 0 4 0 4 5 1 6z" fill="#aaa" />
          <circle cx="13" cy="11" r="5.500" fill="#ffe000" />
          <path d="M13 8v4M13 13.500v1" stroke="#222" strokeWidth="1.300" />
        </svg>
        <svg width="18" height="18" viewBox="0 0 18 18" className="ml-[12px]" fill="none" stroke="#fff" strokeWidth="1.300">
          <path d="M2 8C2 1 12-1 16 5M16 1v4h-4M2 17v-5h5M2 12c1 3 3 4 5 4.500" />
          <circle cx="13" cy="13" r="4.500" fill="#ff9410" stroke="none" />
        </svg>
        <Keyboard size={18} strokeWidth={1.5} className="ml-[15px]" />
        <Wifi size={17} strokeWidth={2} className="ml-[14px]" />
        <Volume2 size={17} strokeWidth={1.5} className="ml-[7px]" />
        <svg width="18" height="16" viewBox="0 0 18 16" className="ml-[7px]" fill="none" stroke="#fff" strokeWidth="1.400">
          <rect x="2" y="4" width="13" height="9" rx="2" />
          <rect x="5" y="6" width="8" height="5" fill="#fff" />
          <path d="M17 7v3" />
          <path d="M4 0L1 5h3L3 9l4-5H4z" fill="#fff" stroke="none" />
        </svg>
        <div className="ml-[16px] text-right leading-[16px] tracking-[-0.15px]">
          17:27
          <br />
          19/01/2025
        </div>
      </div>
    </div>
  );
}

export default function App() {
  return (
    <div className="h-[1079px] w-[1919px] overflow-hidden">
      <BrowserChrome />
      <Page />
      <Taskbar />
    </div>
  );
}
